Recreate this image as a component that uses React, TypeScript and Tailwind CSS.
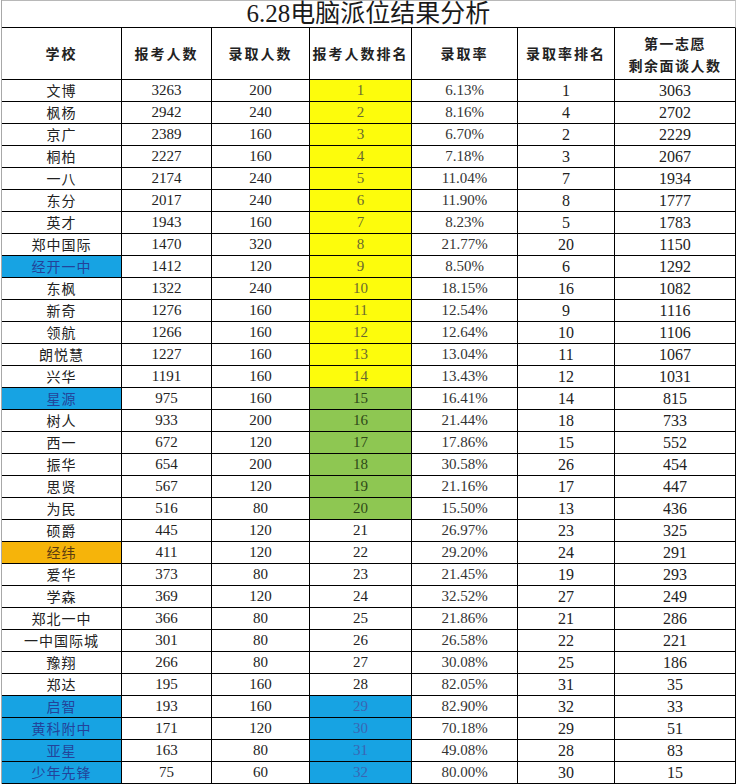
import React from 'react';

type Row = [string, number, number, number, string, number, number];

const rows: Row[] = [
  ['文博', 3263, 200, 1, '6.13%', 1, 3063],
  ['枫杨', 2942, 240, 2, '8.16%', 4, 2702],
  ['京广', 2389, 160, 3, '6.70%', 2, 2229],
  ['桐柏', 2227, 160, 4, '7.18%', 3, 2067],
  ['一八', 2174, 240, 5, '11.04%', 7, 1934],
  ['东分', 2017, 240, 6, '11.90%', 8, 1777],
  ['英才', 1943, 160, 7, '8.23%', 5, 1783],
  ['郑中国际', 1470, 320, 8, '21.77%', 20, 1150],
  ['经开一中', 1412, 120, 9, '8.50%', 6, 1292],
  ['东枫', 1322, 240, 10, '18.15%', 16, 1082],
  ['新奇', 1276, 160, 11, '12.54%', 9, 1116],
  ['领航', 1266, 160, 12, '12.64%', 10, 1106],
  ['朗悦慧', 1227, 160, 13, '13.04%', 11, 1067],
  ['兴华', 1191, 160, 14, '13.43%', 12, 1031],
  ['星源', 975, 160, 15, '16.41%', 14, 815],
  ['树人', 933, 200, 16, '21.44%', 18, 733],
  ['西一', 672, 120, 17, '17.86%', 15, 552],
  ['振华', 654, 200, 18, '30.58%', 26, 454],
  ['思贤', 567, 120, 19, '21.16%', 17, 447],
  ['为民', 516, 80, 20, '15.50%', 13, 436],
  ['硕爵', 445, 120, 21, '26.97%', 23, 325],
  ['经纬', 411, 120, 22, '29.20%', 24, 291],
  ['爱华', 373, 80, 23, '21.45%', 19, 293],
  ['学森', 369, 120, 24, '32.52%', 27, 249],
  ['郑北一中', 366, 80, 25, '21.86%', 21, 286],
  ['一中国际城', 301, 80, 26, '26.58%', 22, 221],
  ['豫翔', 266, 80, 27, '30.08%', 25, 186],
  ['郑达', 195, 160, 28, '82.05%', 31, 35],
  ['启智', 193, 160, 29, '82.90%', 32, 33],
  ['黄科附中', 171, 120, 30, '70.18%', 29, 51],
  ['亚星', 163, 80, 31, '49.08%', 28, 83],
  ['少年先锋', 75, 60, 32, '80.00%', 30, 15],
];

const cell = 'flex items-center justify-center border-r border-b border-black h-[22px]';
const num = "font-['Liberation_Serif','Noto_Sans_CJK_SC',serif]";
const han = "font-['Noto_Sans_CJK_SC',sans-serif]";

// school name cell colour
function nameColor(i: number) {
  if (i === 8 || i === 14 || i >= 28) return 'bg-[#17a3e3] text-[#23439a]';
  if (i === 21) return 'bg-[#f6b40a] text-[#5a3a10]';
  return 'bg-white text-[#222]';
}

// rank column: yellow top 14, green 15-20, blue last four
function rankColor(i: number) {
  if (i < 14) return 'bg-[#fdfc0c] text-[#6a6a30]';
  if (i < 20) return 'bg-[#8ec752] text-[#2f4a18]';
  if (i >= 28) return 'bg-[#17a3e3] text-[#3a66b4]';
  return 'bg-white text-[#222]';
}

export default function App() {
  const headers = ['学校', '报考人数', '录取人数', '报考人数排名', '录取率', '录取率排名'];

  return (
    <div className="w-[736px] h-[784px] bg-white overflow-hidden pl-[1px]">
      <div className="w-[735px] border-l border-[#a8a8a8]">
        <div className="h-[28px] border-t border-b border-r border-t-[#b8b8b8] border-r-[#c8c8c8] border-b-black flex items-end justify-center leading-none text-[25px] text-[#1a1a1a] pb-[1px] font-['Liberation_Serif','Noto_Sans_CJK_SC',serif]">
          6.28电脑派位结果分析
        </div>

        <div className="grid grid-cols-[120px_90px_98px_102px_106px_97px_121px]">
          {headers.map((h) => (
            <div
              key={h}
              className={`h-[52px] flex items-center justify-center border-r border-b border-black text-[14px] font-semibold tracking-[2px] text-[#222] ${han}`}
            >
              {h}
            </div>
          ))}
          <div
            className={`h-[52px] flex flex-col items-center justify-center border-r border-b border-black text-[14px] font-semibold tracking-[1.5px] text-[#222] leading-[22px] ${han}`}
          >
            <span>第一志愿</span>
            <span>剩余面谈人数</span>
          </div>

          {rows.map((r, i) => (
            <React.Fragment key={r[0]}>
              <div className={`${cell} ${nameColor(i)} text-[14px] tracking-[1px] ${han}`}>{r[0]}</div>
              <div className={`${cell} text-[15px] text-[#222] ${num}`}>{r[1]}</div>
              <div className={`${cell} text-[15px] text-[#222] ${num}`}>{r[2]}</div>
              <div className={`${cell} ${rankColor(i)} text-[15px] ${num}`}>{r[3]}</div>
              <div className={`${cell} text-[15px] text-[#333] ${num}`}>{r[4]}</div>
              <div className={`${cell} text-[16px] text-[#222] ${num}`}>{r[5]}</div>
              <div className={`${cell} text-[16px] text-[#222] ${num}`}>{r[6]}</div>
            </React.Fragment>
          ))}
        </div>
      </div>
    </div>
  );
}
